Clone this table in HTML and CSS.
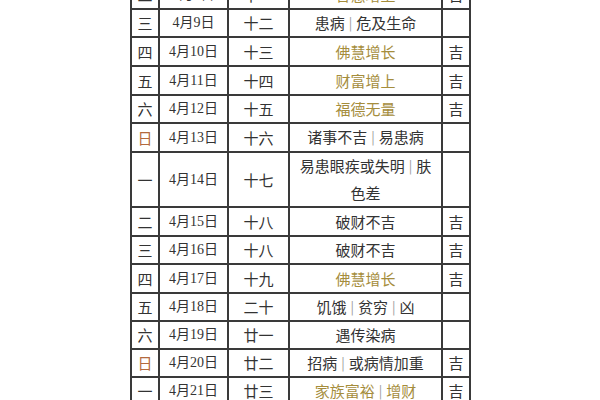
FILE: index.html
```html
<!DOCTYPE html>
<html lang="zh">
<head>
<meta charset="utf-8">
<link rel="stylesheet" href="styles.css">
</head>
<body>
<div class="page">
<table class="cal">
<colgroup><col class="c-day"><col class="c-date"><col class="c-lunar"><col class="c-note"><col class="c-ji"></colgroup>
<tbody>
<tr><td>二</td><td class="date">4月8日</td><td>十一</td><td class="gold">智慧增上</td><td>吉</td></tr>
<tr><td>三</td><td class="date">4月9日</td><td>十二</td><td>患病<span class="sep">|</span>危及生命</td><td></td></tr>
<tr class="h29"><td>四</td><td class="date">4月10日</td><td>十三</td><td class="gold">佛慧增长</td><td>吉</td></tr>
<tr class="h29"><td>五</td><td class="date">4月11日</td><td>十四</td><td class="gold">财富增上</td><td>吉</td></tr>
<tr><td>六</td><td class="date">4月12日</td><td>十五</td><td class="gold">福德无量</td><td>吉</td></tr>
<tr class="h29"><td class="sun">日</td><td class="date">4月13日</td><td>十六</td><td>诸事不吉<span class="sep">|</span>易患病</td><td></td></tr>
<tr class="tall"><td>一</td><td class="date">4月14日</td><td>十七</td><td>易患眼疾或失明<span class="sep">|</span>肤<br>色差</td><td></td></tr>
<tr class="h29"><td>二</td><td class="date">4月15日</td><td>十八</td><td>破财不吉</td><td>吉</td></tr>
<tr><td>三</td><td class="date">4月16日</td><td>十八</td><td>破财不吉</td><td>吉</td></tr>
<tr class="h29"><td>四</td><td class="date">4月17日</td><td>十九</td><td class="gold">佛慧增长</td><td>吉</td></tr>
<tr><td>五</td><td class="date">4月18日</td><td>二十</td><td>饥饿<span class="sep">|</span>贫穷<span class="sep">|</span>凶</td><td></td></tr>
<tr><td>六</td><td class="date">4月19日</td><td>廿一</td><td>遇传染病</td><td></td></tr>
<tr><td class="sun">日</td><td class="date">4月20日</td><td>廿二</td><td>招病<span class="sep">|</span>或病情加重</td><td>吉</td></tr>
<tr><td>一</td><td class="date">4月21日</td><td>廿三</td><td class="gold">家族富裕<span class="sep">|</span>增财</td><td>吉</td></tr>
</tbody>
</table>
</div>
</body>
</html>
```
FILE: styles.css
```css
html, body {
  margin: 0;
  padding: 0;
  background: #ffffff;
}
.page {
  width: 600px;
  height: 400px;
  overflow: hidden;
  padding-left: 130px;
  box-sizing: border-box;
}
.cal {
  border-collapse: collapse;
  table-layout: fixed;
  width: 341px;
  margin-top: -20px;
  font-family: "Noto Sans CJK SC", "Noto Sans", sans-serif;
  font-size: 15px;
  color: #333333;
}
.c-day { width: 28px; }
.c-date { width: 69px; }
.c-lunar { width: 61px; }
.c-note { width: 153px; }
.c-ji { width: 28px; }
.cal td {
  border: 2px solid #3a3a3a;
  height: 26px;
  padding: 0;
  text-align: center;
  vertical-align: middle;
  line-height: 20px;
  white-space: nowrap;
}
.cal tr.h29 td {
  height: 27px;
}
.cal tr.tall td {
  height: 53px;
  line-height: 26px;
}
.cal td.date {
  font-family: "Liberation Serif", "Noto Sans CJK SC", serif;
  font-size: 14px;
}
.gold { color: #a58d3c; }
.sun { color: #b36a3e; }
.sep {
  color: #9a9a9a;
  padding: 0 4px;
  font-size: 13px;
  position: relative;
  top: -1px;
}
```
